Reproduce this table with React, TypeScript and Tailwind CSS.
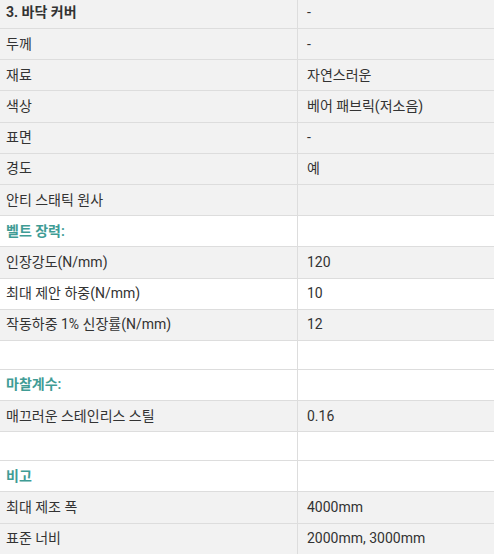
import React from "react";

type Row = {
  label?: string;
  value?: string;
  kind?: "title" | "section" | "empty";
  white?: boolean;
};

const rows: Row[] = [
  { label: "3. 바닥 커버", value: "-", kind: "title" },
  { label: "두께", value: "-" },
  { label: "재료", value: "자연스러운" },
  { label: "색상", value: "베어 패브릭(저소음)" },
  { label: "표면", value: "-" },
  { label: "경도", value: "예" },
  { label: "안티 스태틱 원사", value: "" },
  { label: "벨트 장력:", kind: "section", white: true },
  { label: "인장강도(N/mm)", value: "120" },
  { label: "최대 제안 하중(N/mm)", value: "10", white: true },
  { label: "작동하중 1% 신장률(N/mm)", value: "12" },
  { kind: "empty", white: true },
  { label: "마찰계수:", kind: "section", white: true },
  { label: "매끄러운 스테인리스 스틸", value: "0.16" },
  { kind: "empty", white: true },
  { label: "비고", kind: "section", white: true },
  { label: "최대 제조 폭", value: "4000mm" },
  { label: "표준 너비", value: "2000mm, 3000mm" },
];

export default function App() {
  return (
    <div className="h-[554px] w-[494px] overflow-hidden bg-white">
      <div
        className="-mt-[2.2px] text-[14px] text-[#333333]"
        style={{ fontFamily: "Roboto, 'Noto Sans CJK KR', sans-serif" }}
      >
        {rows.map((r, i) => (
          <div
            key={i}
            className={`grid grid-cols-[298px_1fr] border-b border-[#dddddd] ${
              r.white ? "bg-white" : "bg-[#f2f2f2]"
            } ${r.kind === "empty" ? "h-[29px]" : "h-[31.2px]"}`}
          >
            <div
              className={`flex items-center border-r border-[#dddddd] pl-[6px] ${
                r.kind === "title" ? "font-bold" : ""
              } ${r.kind === "section" ? "font-semibold text-[#3f9c95]" : ""}`}
            >
              {r.label}
            </div>
            <div className="flex items-center pl-[9px]">{r.value}</div>
          </div>
        ))}
      </div>
    </div>
  );
}
